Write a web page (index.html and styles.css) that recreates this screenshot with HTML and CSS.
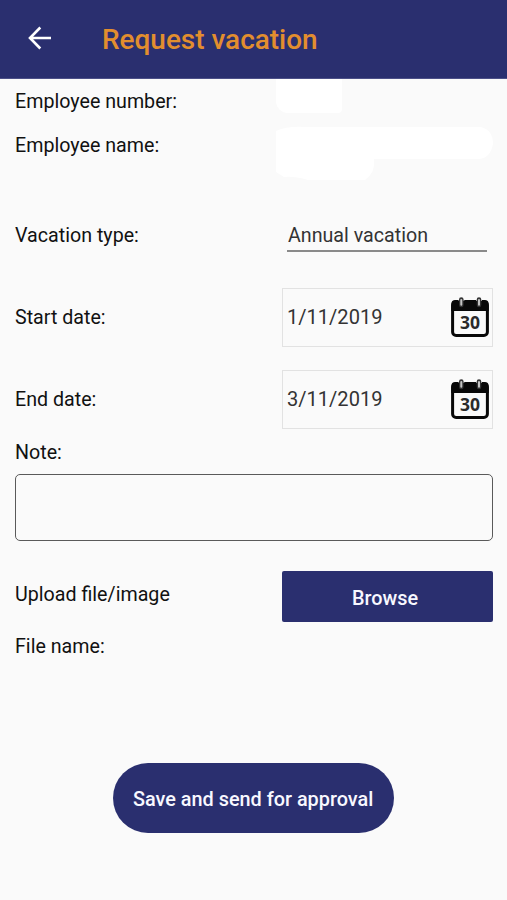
FILE: index.html
```html
<!DOCTYPE html>
<html lang="en">
<head>
<meta charset="utf-8">
<title>Request vacation</title>
<link rel="stylesheet" href="styles.css">
</head>
<body>
<header class="bar">
  <svg class="back" viewBox="0 0 24 24" width="24" height="24"><path d="M23 12H2M12.3 1.5 2 12l10.3 10.5" fill="none" stroke="#fff" stroke-width="2.6"/></svg>
  <h1 class="title">Request vacation</h1>
</header>
<main class="form">
  <div class="row info"><span class="label">Employee number:</span><span class="blank short"></span></div>
  <div class="row info"><span class="label">Employee name:</span><span class="blank long"></span></div>
  <div class="row field first"><span class="label">Vacation type:</span><div class="select"><span class="value">Annual vacation</span></div></div>
  <div class="row field"><span class="label">Start date:</span><div class="date"><span class="value day">1/11/2019</span>
    <svg class="cal" viewBox="0 0 38 40">
      <rect x="1.6" y="5" width="34.8" height="33.4" rx="3.5" fill="#fafafa" stroke="#080808" stroke-width="3"/>
      <path d="M0.3 14V7a4 4 0 0 1 4-4h29.4a4 4 0 0 1 4 4v7z" fill="#080808"/>
      <path class="ring-gap" d="M10.3 2.5v5.5M28 2.5v5.5"/>
      <path class="ring" d="M10.3 2.5v5.5M28 2.5v5.5"/>
      <path class="ring-light" d="M10.3 3v4.8M28 3v4.8"/>
      <text x="19" y="32" text-anchor="middle" class="cal-num">30</text>
    </svg></div></div>
  <div class="row field"><span class="label">End date:</span><div class="date"><span class="value day">3/11/2019</span>
    <svg class="cal" viewBox="0 0 38 40">
      <rect x="1.6" y="5" width="34.8" height="33.4" rx="3.5" fill="#fafafa" stroke="#080808" stroke-width="3"/>
      <path d="M0.3 14V7a4 4 0 0 1 4-4h29.4a4 4 0 0 1 4 4v7z" fill="#080808"/>
      <path class="ring-gap" d="M10.3 2.5v5.5M28 2.5v5.5"/>
      <path class="ring" d="M10.3 2.5v5.5M28 2.5v5.5"/>
      <path class="ring-light" d="M10.3 3v4.8M28 3v4.8"/>
      <text x="19" y="32" text-anchor="middle" class="cal-num">30</text>
    </svg></div></div>
  <div class="note-label"><span class="label">Note:</span></div>
  <div class="note"></div>
  <div class="row upload"><span class="label">Upload file/image</span><div class="browse"><span class="caption">Browse</span></div></div>
  <div class="file"><span class="label">File name:</span></div>
  <div class="save"><span class="caption">Save and send for approval</span></div>
</main>
</body>
</html>
```
FILE: styles.css
```css
* { box-sizing: border-box; }
body { margin: 0; height: 900px; background: #fafafa; color: #111; font: 21px/24px Roboto, sans-serif; }
.bar { height: 79px; background: #2a2f6f; display: flex; align-items: center; padding-left: 28px; border-bottom: 1px solid #4c5088; }
.back { margin-top: -2px; }
.title { margin: 1px 0 0 50px; font-size: 28.5px; font-weight: 500; color: #e28e2e; white-space: nowrap; transform: scaleX(.98); transform-origin: left; }
.form { display: flex; flex-direction: column; padding: 0 14px 0 15px; }
.row { display: flex; align-items: center; justify-content: space-between; }
.info { height: 44px; }
.field { height: 82px; }
.first { margin-top: 27px; }
.label, .value { display: inline-block; white-space: nowrap; transform: scaleX(.936); transform-origin: left; }
.value { color: #333; }
.day { transform: scaleX(.955); }
.caption { display: inline-block; white-space: nowrap; transform: scaleX(.945); }
.blank { background: #fff; }
.short { width: 66px; height: 34px; margin: -10px 151px 0 0; border-radius: 0 0 4px 12px; }
.long { width: 217px; height: 55px; margin: 17px 0 0; clip-path: path("M0 5Q12 0 28 1H205Q217 4 217 18Q214 33 202 33H98Q100 46 89 54H32Q18 50 8 51L0 46Z"); }
.select { width: 200px; height: 33px; margin-right: 6px; padding: 4px 0 0 1px; border-bottom: 2px solid #8a8a8a; }
.date { width: 211px; height: 59px; border: 1px solid #e2e2e2; display: flex; align-items: center; justify-content: space-between; padding: 0 3px 0 4px; }
.cal { width: 38px; height: 40px; }
.cal-num { font: 700 17.5px "Open Sans", sans-serif; fill: #2a2a2a; }
.ring-gap, .ring, .ring-light { fill: none; stroke-linecap: round; }
.ring-gap { stroke: #fafafa; stroke-width: 6; clip-path: inset(0 0 62% 0); }
.ring { stroke: #333; stroke-width: 4.6; }
.ring-light { stroke: #c4c4c4; stroke-width: 2; }
.note-label { height: 34px; }
.note { height: 67px; border: 1.5px solid #5a5a5a; border-radius: 5px; }
.upload { height: 51px; margin-top: 30px; }
.upload .label { margin-top: -6px; }
.browse, .save { background: #2a2f6f; color: #f8f8ff; font-weight: 500; display: flex; align-items: center; justify-content: center; }
.browse { width: 211px; height: 51px; border-radius: 2px; padding: 2px 5px 0 0; }
.file { margin-top: 12px; }
.save { align-self: center; width: 281px; height: 70px; margin: 105px 1px 0 0; border-radius: 35px; padding-top: 2px; }
```
